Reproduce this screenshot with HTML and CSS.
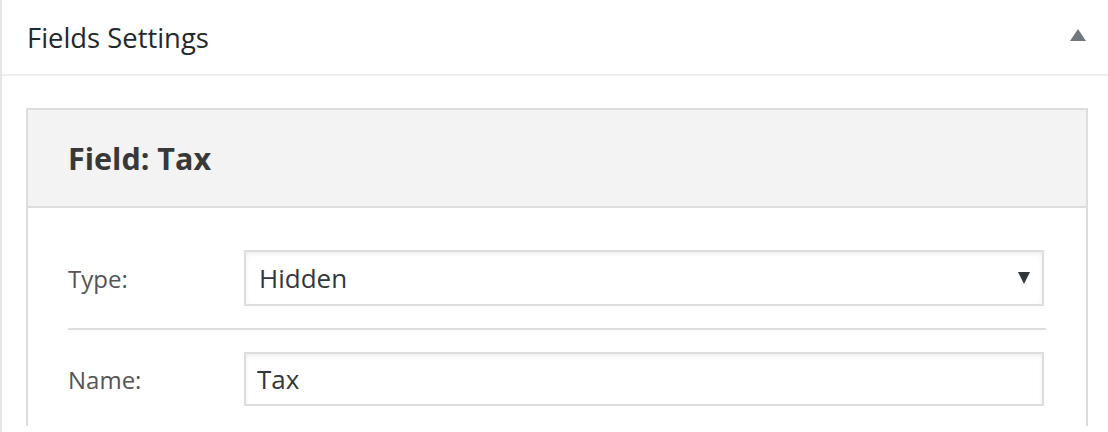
FILE: index.html
```html
<!DOCTYPE html>
<html lang="en">
<head>
<meta charset="utf-8">
<title>Fields Settings</title>
<link rel="stylesheet" href="styles.css">
</head>
<body>
<div class="postbox">
  <div class="postbox-header">
    <h2 class="postbox-title">Fields Settings</h2>
    <svg class="toggle" width="16" height="12" viewBox="0 0 16 12"><polygon points="8,0 16,12 0,12" fill="#72777c"/></svg>
  </div>
  <div class="inside">
    <div class="field-box">
      <div class="field-head"><h3 class="field-title">Field: Tax</h3></div>
      <div class="field-body">
        <div class="row">
          <label class="label">Type:</label>
          <div class="control select">
            <span class="value">Hidden</span>
            <svg class="caret" width="12" height="12" viewBox="0 0 12 12"><polygon points="0,0 12,0 6,12" fill="#32373c"/></svg>
          </div>
        </div>
        <div class="row">
          <label class="label">Name:</label>
          <div class="control input"><span class="value">Tax</span></div>
        </div>
      </div>
    </div>
  </div>
</div>
</body>
</html>
```
FILE: styles.css
```css
html, body {
  margin: 0;
  padding: 0;
  background: #fff;
  font-family: "Open Sans", "Noto Sans", sans-serif;
}
.postbox {
  border-left: 2px solid #e5e5e5;
  height: 432px;
  box-sizing: border-box;
}
.postbox-header {
  height: 74px;
  border-bottom: 2px solid #eeeeee;
  display: flex;
  align-items: center;
  justify-content: space-between;
  padding: 0 22px 0 25px;
}
.postbox-title {
  margin: 0;
  font-size: 27.4px;
  font-weight: 400;
  color: #23282d;
  line-height: 1;
  position: relative;
  top: 1px;
}
.toggle {
  display: block;
  margin-top: -4px;
}
.inside {
  padding: 32px 20px 0 24px;
}
.field-box {
  border: 2px solid #dddddd;
  border-bottom: none;
}
.field-head {
  height: 96px;
  background: #f3f3f3;
  border-bottom: 2px solid #dddddd;
  display: flex;
  align-items: center;
  padding-left: 40px;
}
.field-title {
  margin: 0;
  font-size: 30.5px;
  font-weight: 700;
  color: #383838;
  line-height: 1;
}
.field-body {
  padding: 42px 40px 20px 40px;
}
.row {
  display: flex;
  align-items: center;
}
.row + .row {
  border-top: 2px solid #dddddd;
  margin-top: 22px;
  padding-top: 22px;
}
.label {
  width: 176px;
  flex: none;
  font-size: 24px;
  color: #555555;
}
.control {
  flex: 1;
  margin-right: 2px;
  box-sizing: border-box;
  border: 2px solid #dddddd;
  box-shadow: inset 0 2px 4px rgba(0, 0, 0, 0.07);
  background: #fff;
  display: flex;
  align-items: center;
  font-size: 26px;
  color: #32373c;
}
.select {
  height: 56px;
  padding: 0 12px 0 13px;
  justify-content: space-between;
}
.input {
  height: 54px;
  padding: 0 11px;
}
.caret {
  display: block;
}
```
